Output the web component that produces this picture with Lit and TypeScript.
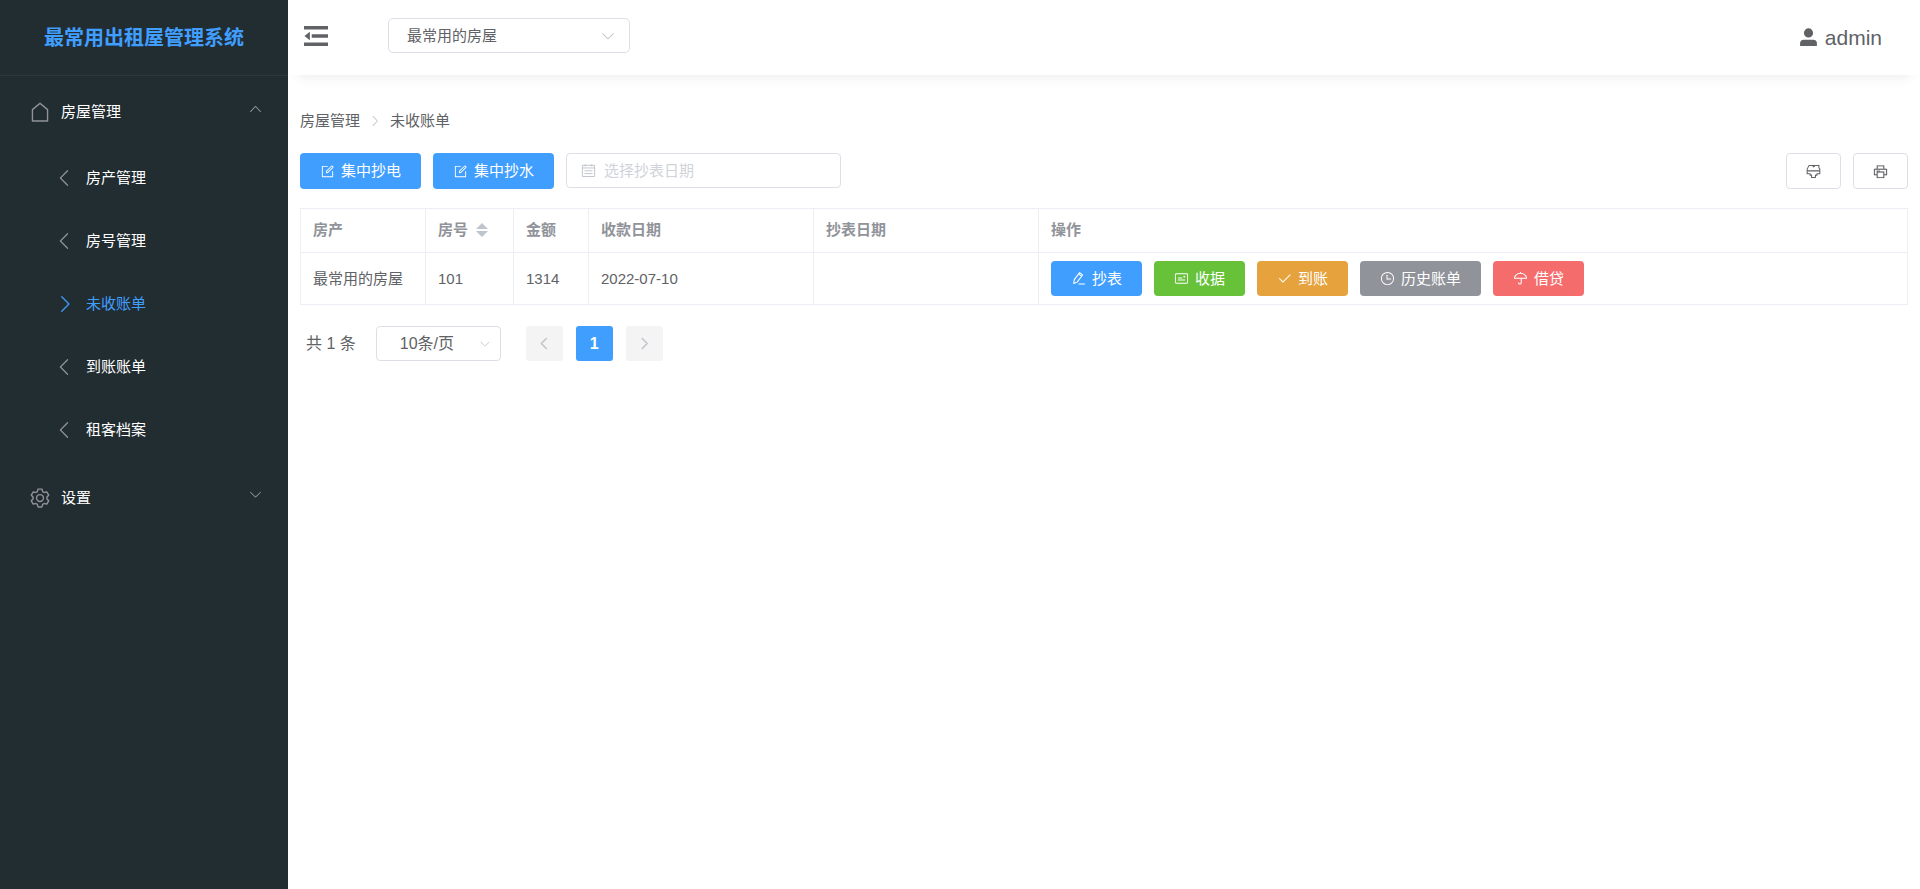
import { LitElement, html, css, svg } from 'lit';
import { customElement, property } from 'lit/decorators.js';

const shapes: Record<string, unknown> = {
  house: svg`<path d="M192 413.952V896h640V413.952L512 147.328 192 413.952zM139.52 374.4l352-293.312a32 32 0 0 1 40.96 0l352 293.312A32 32 0 0 1 896 398.976V928a32 32 0 0 1-32 32H160a32 32 0 0 1-32-32V398.976a32 32 0 0 1 11.52-24.576z"/>`,
  setting: svg`<path d="M600.704 64a32 32 0 0 1 30.464 22.208l35.2 109.376c14.784 7.232 28.928 15.36 42.432 24.512l112.384-24.192a32 32 0 0 1 34.432 15.36L944.32 364.8a32 32 0 0 1-4.032 37.504l-77.12 85.12a357.12 357.12 0 0 1 0 49.024l77.12 85.248a32 32 0 0 1 4.032 37.504l-88.704 153.6a32 32 0 0 1-34.432 15.296L708.8 803.904c-13.44 9.088-27.648 17.28-42.368 24.512l-35.264 109.376A32 32 0 0 1 600.704 960H423.296a32 32 0 0 1-30.464-22.208L357.696 828.48a351.616 351.616 0 0 1-42.56-24.64l-112.32 24.256a32 32 0 0 1-34.432-15.36L79.68 659.2a32 32 0 0 1 4.032-37.504l77.12-85.248a357.12 357.12 0 0 1 0-48.896l-77.12-85.248A32 32 0 0 1 79.68 364.8l88.704-153.6a32 32 0 0 1 34.432-15.296l112.32 24.256c13.568-9.152 27.776-17.408 42.56-24.64l35.2-109.312A32 32 0 0 1 423.232 64H600.64zm-23.424 64H446.72l-36.352 113.088-24.512 11.968a294.113 294.113 0 0 0-34.816 20.096l-22.656 15.36-116.224-25.088-65.28 113.152 79.68 88.192-1.92 27.136a293.12 293.12 0 0 0 0 40.192l1.92 27.136-79.808 88.192 65.344 113.152 116.224-25.024 22.656 15.296a294.113 294.113 0 0 0 34.816 20.096l24.512 11.968L446.72 896h130.688l36.48-113.152 24.448-11.904a288.282 288.282 0 0 0 34.752-20.096l22.592-15.296 116.288 25.024 65.28-113.152-79.744-88.192 1.92-27.136a293.12 293.12 0 0 0 0-40.256l-1.92-27.136 79.808-88.128-65.344-113.152-116.288 24.96-22.592-15.232a287.616 287.616 0 0 0-34.752-20.096l-24.448-11.904L577.344 128zM512 320a192 192 0 1 1 0 384 192 192 0 0 1 0-384zm0 64a128 128 0 1 0 0 256 128 128 0 0 0 0-256z"/>`,
  left: svg`<path d="M609.408 149.376 277.76 489.6a32 32 0 0 0 0 44.672l331.648 340.352a29.12 29.12 0 0 0 41.728 0 30.592 30.592 0 0 0 0-42.752L339.264 511.936l311.872-319.872a30.592 30.592 0 0 0 0-42.688 29.12 29.12 0 0 0-41.728 0z"/>`,
  right: svg`<path d="M340.864 149.312a30.592 30.592 0 0 0 0 42.752L652.736 512 340.864 831.872a30.592 30.592 0 0 0 0 42.752 29.12 29.12 0 0 0 41.728 0L714.24 534.336a32 32 0 0 0 0-44.672L382.592 149.376a29.12 29.12 0 0 0-41.728 0z"/>`,
  up: svg`<path d="m488.832 344.32-339.84 356.672a32 32 0 0 0 0 44.16l.384.384a29.44 29.44 0 0 0 42.688 0l320-335.872 319.872 335.872a29.44 29.44 0 0 0 42.688 0l.384-.384a32 32 0 0 0 0-44.16L535.168 344.32a32 32 0 0 0-46.336 0z"/>`,
  down: svg`<path d="M831.872 340.864 512 652.672 192.128 340.864a30.592 30.592 0 0 0-42.752 0 29.12 29.12 0 0 0 0 41.6L489.664 714.24a32 32 0 0 0 44.672 0l340.288-331.712a29.12 29.12 0 0 0 0-41.728 30.592 30.592 0 0 0-42.752 0z"/>`,
  fold: svg`<path d="M0 88h1024v150H0zM330 437h694v150H330zM0 786h1024v150H0zM250 330v364L20 512z"/>`,
  user: svg`<path d="M288 290a224 224 0 1 0 448 0 224 224 0 1 0-448 0zm602 638H134a32 32 0 0 1-32-32v-96a180 180 0 0 1 180-180h460a180 180 0 0 1 180 180v96a32 32 0 0 1-32 32z"/>`,
  edit: svg`<path d="M832 512a32 32 0 1 1 64 0v352a32 32 0 0 1-32 32H160a32 32 0 0 1-32-32V160a32 32 0 0 1 32-32h352a32 32 0 0 1 0 64H192v640h640V512z"/><path d="m469.952 554.24 52.8-7.552L847.104 222.4a32 32 0 1 0-45.248-45.248L477.44 501.44l-7.552 52.8zm422.4-422.4a96 96 0 0 1 0 135.808l-331.84 331.84a32 32 0 0 1-18.112 9.088L436.8 623.68a32 32 0 0 1-36.224-36.224l15.104-105.6a32 32 0 0 1 9.024-18.112l331.904-331.84a96 96 0 0 1 135.744 0z"/>`,
  pen: svg`<path d="M590 110 220 590 190 860 420 760 790 270 590 110zM530 195l185 150M540 890h380" fill="none" stroke="currentColor" stroke-width="72" stroke-linejoin="round" stroke-linecap="round"/>`,
  postcard: svg`<path d="M160 224a32 32 0 0 0-32 32v512a32 32 0 0 0 32 32h704a32 32 0 0 0 32-32V256a32 32 0 0 0-32-32H160zm0-64h704a96 96 0 0 1 96 96v512a96 96 0 0 1-96 96H160a96 96 0 0 1-96-96V256a96 96 0 0 1 96-96z"/><path d="M704 320a64 64 0 1 1 0 128 64 64 0 0 1 0-128zM288 448h256q32 0 32 32t-32 32H288q-32 0-32-32t32-32zm0 128h448q32 0 32 32t-32 32H288q-32 0-32-32t32-32z"/>`,
  check: svg`<path d="M406.656 706.944 195.84 496.256a32 32 0 1 0-45.248 45.248l256 256 512-512a32 32 0 0 0-45.248-45.248L406.592 706.944z"/>`,
  time: svg`<path d="M512 896a384 384 0 1 0 0-768 384 384 0 0 0 0 768zm0 64a448 448 0 1 1 0-896 448 448 0 0 1 0 896z"/><path d="M480 256a32 32 0 0 1 32 32v256a32 32 0 0 1-64 0V288a32 32 0 0 1 32-32z"/><path d="M480 512h256q32 0 32 32t-32 32H480q-32 0-32-32t32-32z"/>`,
  umbrella: svg`<path d="M512 80v80M96 500a416 340 0 0 1 832 0zM560 500v300a90 90 0 0 1-180 0" fill="none" stroke="currentColor" stroke-width="72" stroke-linejoin="round" stroke-linecap="round"/>`,
  calendar: svg`<path d="M96 160h832v760H96zM96 340h832M290 70v160M734 70v160M240 530h544M240 720h544" fill="none" stroke="currentColor" stroke-width="66"/>`,
  goods: svg`<path d="M80 470v200h200v90h100v160h264V760h100v-90h200V470zM80 470V350L200 110h640l40-20v160l64 100v120M460 110l60 90 100-90" fill="none" stroke="currentColor" stroke-width="70" stroke-linejoin="round"/>`,
  printer: svg`<path d="M256 768H105c-20 0-41-20-41-41V380c0-30 20-60 60-60h132V96h512v224h132c40 0 60 30 60 60v347c0 21-20 41-41 41H768v192H256zm64-192v320h384V576zm-64 128V512h512v192h128V384H128v320zm64-384h384V160H320zm-64 128h64v64h-64zm128 0h64v64h-64z" stroke="currentColor" stroke-width="12"/>`,
};

const icon = (name: string, size = 15) =>
  html`<svg class="icon" aria-hidden="true" viewBox="0 0 1024 1024" width=${size} height=${size} fill="currentColor">${shapes[name]}</svg>`;

const shared = css`
  * { box-sizing: border-box; }
  .icon { display: block; flex: none; }
  button, select, input { font: inherit; margin: 0; }
  button { cursor: pointer; }
  a { color: inherit; text-decoration: none; }
  ul { list-style: none; margin: 0; padding: 0; }
`;

@customElement('side-menu')
class SideMenu extends LitElement {
  @property() active = '未收账单';
  private items = ['房产管理', '房号管理', '未收账单', '到账账单', '租客档案'];

  static styles = [shared, css`
    :host { display: block; background: #222d32; color: #fff; }
    .title {
      height: 76px; margin: 0; border-bottom: 1px solid #2c373c;
      display: flex; align-items: center; justify-content: center;
      font-size: 20px; font-weight: 700; color: #409eff;
    }
    .group {
      width: 100%; height: 72px; padding: 0 25px 0 29px; border: 0;
      background: none; color: inherit; text-align: left;
      display: flex; align-items: center; gap: 10px;
    }
    .group .icon { color: #909399; }
    .arrow { padding-bottom: 7px; }
    .label { flex: 1; }
    .list { display: grid; gap: 1px; }
    .entry {
      height: 62px; padding: 0 0 2px 54px; display: flex; align-items: center; gap: 10px;
    }
    .entry .icon { color: #909399; }
    .entry.on, .entry.on .icon { color: #409eff; }
  `];

  render() {
    return html`
      <h1 class="title">最常用出租屋管理系统</h1>
      <nav>
        <button class="group" aria-expanded="true">${icon('house', 22)}<span class="label">房屋管理</span><span class="arrow">${icon('up')}</span></button>
        <ul class="list">
          ${this.items.map((t) => html`<li><a href="#" class="entry ${t === this.active ? 'on' : ''}">${icon(t === this.active ? 'right' : 'left', 22)}${t}</a></li>`)}
        </ul>
        <button class="group" aria-expanded="false">${icon('setting', 22)}<span class="label">设置</span><span class="arrow">${icon('down')}</span></button>
      </nav>`;
  }
}

@customElement('top-bar')
class TopBar extends LitElement {
  static styles = [shared, css`
    :host {
      box-sizing: border-box;
      display: flex; align-items: center; height: 75px; padding: 0 38px 4px 16px;
      box-shadow: 0 12px 12px -10px rgba(0, 0, 0, 0.08);
    }
    .fold { border: 0; padding: 0; background: none; color: #606266; margin-right: 60px; }
    .pick { position: relative; width: 242px; color: #c0c4cc; }
    .pick select {
      display: block; appearance: none; width: 100%; height: 35px; padding: 0 18px;
      border: 1px solid #dcdfe6; border-radius: 5px; background: #fff; color: #606266;
    }
    .pick .icon { position: absolute; right: 14px; top: 10px; pointer-events: none; }
    .user {
      margin-left: auto; padding-top: 4px; display: flex; align-items: center; gap: 6px;
      font-size: 21px; color: #606266;
    }
  `];

  render() {
    return html`
      <button class="fold" aria-label="折叠菜单">${icon('fold', 24)}</button>
      <div class="pick">
        <select aria-label="房屋"><option>最常用的房屋</option></select>${icon('down', 16)}
      </div>
      <a class="user" href="#">${icon('user', 21)}admin</a>`;
  }
}

@customElement('bill-page')
class BillPage extends LitElement {
  private actions = [
    ['blue', 'pen', '抄表'],
    ['green', 'postcard', '收据'],
    ['orange', 'check', '到账'],
    ['gray', 'time', '历史账单'],
    ['red', 'umbrella', '借贷'],
  ];

  static styles = [shared, css`
    :host { display: block; padding: 36px 12px; color: #606266; }
    .crumbs { display: flex; align-items: center; gap: 8px; line-height: 20px; }
    .crumbs .icon { color: #c0c4cc; }
    .tools { display: flex; align-items: flex-start; gap: 12px; margin: 22px 0 19px; }
    .btn {
      display: flex; align-items: center; gap: 6px; height: 36px; padding: 0 20px;
      border: 0; border-radius: 4px; color: #fff; white-space: nowrap;
    }
    .blue { background: #409eff; }
    .green { background: #67c23a; }
    .orange { background: #e6a23c; }
    .gray { background: #909399; }
    .red { background: #f56c6c; }
    .plain { background: #fff; border: 1px solid #dcdfe6; color: #606266; width: 55px; padding: 0; justify-content: center; }
    .spring { flex: 1; }
    .date {
      display: flex; align-items: center; gap: 8px; width: 275px; height: 35px; padding: 0 14px;
      border: 1px solid #dcdfe6; border-radius: 4px; color: #c0c4cc;
    }
    .date input { flex: 1; min-width: 0; border: 0; outline: 0; padding: 0; background: none; color: #606266; }
    .date input::placeholder { color: #d0d3d9; opacity: 1; }
    table {
      width: 100%; table-layout: fixed; border-collapse: collapse; border: 1px solid #ebeef5;
    }
    th, td { border: 1px solid #ebeef5; padding: 0 12px; text-align: left; white-space: nowrap; }
    th { height: 44px; padding-bottom: 2px; color: #909399; font-weight: 700; }
    td { height: 52px; }
    .c-house { width: 125px; }
    .c-room { width: 88px; }
    .c-sum { width: 75px; }
    .c-date { width: 225px; }
    .sortable { display: flex; align-items: center; gap: 8px; }
    .sort { border: 0; padding: 0; background: none; color: #c0c4cc; display: flex; }
    .ops { display: flex; gap: 12px; }
    .ops .btn { height: 35px; }
    .pager { display: flex; align-items: center; margin: 21px 6px 0; font-size: 16px; }
    .size { position: relative; margin: 0 25px 0 20px; width: 125px; color: #c0c4cc; }
    .size select {
      display: block; appearance: none; width: 100%; height: 35px; padding: 0 23px; background: #fff;
      border: 1px solid #dcdfe6; border-radius: 4px; color: #606266;
    }
    .size .icon { position: absolute; right: 10px; top: 12px; pointer-events: none; }
    .pages { display: flex; gap: 13px; }
    .page {
      width: 37px; height: 35px; border: 0; padding: 0; border-radius: 3px; background: #f4f4f5;
      color: #c0c4cc; display: flex; align-items: center; justify-content: center;
    }
    .page .icon { stroke: currentColor; stroke-width: 60; }
    .page.on { background: #409eff; color: #fff; font-weight: 700; }
  `];

  render() {
    return html`
      <nav class="crumbs"><a href="#">房屋管理</a>${icon('right', 14)}<span>未收账单</span></nav>
      <div class="tools">
        <button class="btn blue">${icon('edit')}集中抄电</button>
        <button class="btn blue">${icon('edit')}集中抄水</button>
        <label class="date">${icon('calendar')}<input aria-label="抄表日期" placeholder="选择抄表日期" /></label>
        <span class="spring"></span>
        <button class="btn plain" aria-label="批量打印">${icon('goods')}</button>
        <button class="btn plain" aria-label="打印">${icon('printer')}</button>
      </div>
      <table>
        <colgroup>
          <col class="c-house" /><col class="c-room" /><col class="c-sum" />
          <col class="c-date" /><col class="c-date" /><col />
        </colgroup>
        <thead>
          <tr>
            <th>房产</th>
            <th><div class="sortable">房号<button class="sort" aria-label="排序"><svg viewBox="0 0 12 16" width="12" height="16" fill="currentColor"><path d="M6 1l6 6H0zM6 15l6-6H0z"/></svg></button></div></th>
            <th>金额</th><th>收款日期</th><th>抄表日期</th><th>操作</th>
          </tr>
        </thead>
        <tbody>
          <tr>
            <td>最常用的房屋</td><td>101</td><td>1314</td><td>2022-07-10</td><td></td>
            <td><div class="ops">${this.actions.map(([tone, glyph, text]) => html`<button class="btn ${tone}">${icon(glyph)}${text}</button>`)}</div></td>
          </tr>
        </tbody>
      </table>
      <div class="pager">
        <span>共 1 条</span>
        <div class="size"><select aria-label="每页条数"><option>10条/页</option></select>${icon('down', 12)}</div>
        <div class="pages">
          <button class="page" aria-label="上一页" disabled>${icon('left')}</button>
          <button class="page on">1</button>
          <button class="page" aria-label="下一页" disabled>${icon('right')}</button>
        </div>
      </div>`;
  }
}

@customElement('app-root')
class AppRoot extends LitElement {
  static styles = css`
    :host {
      display: grid; grid-template-columns: 288px minmax(0, 1fr); min-height: 100vh;
      background: #fff; font: 15px/20px "Liberation Sans", "Noto Sans CJK SC", sans-serif;
    }
    .main { min-width: 0; overflow: hidden; }
  `;

  render() {
    return html`<side-menu></side-menu><main class="main"><top-bar></top-bar><bill-page></bill-page></main>`;
  }
}
